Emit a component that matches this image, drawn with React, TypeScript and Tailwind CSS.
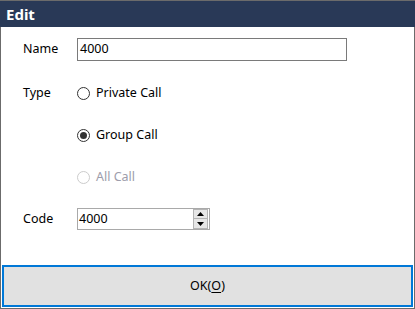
function Radio({ checked, disabled, label }: { checked?: boolean; disabled?: boolean; label: string }) {
  return (
    <div className="flex items-center h-[20px]">
      <span
        className={`w-[13px] h-[13px] rounded-full border flex items-center justify-center ${
          disabled ? "border-[#cccccc]" : "border-[#333333]"
        }`}
      >
        {checked && <span className="w-[7px] h-[7px] rounded-full bg-[#333333]" />}
      </span>
      <span className={`ml-[6px] ${disabled ? "text-[#9d9dab]" : "text-black"}`}>{label}</span>
    </div>
  );
}

export default function App() {
  return (
    <div
      className="w-[415px] h-[309px] border border-[#6b6b6b] bg-white flex flex-col text-[12.5px]"
      style={{ fontFamily: '"Noto Sans", "Open Sans", sans-serif' }}
    >
      {/* Title bar */}
      <div className="h-[26px] -mx-px bg-[#293957] flex items-center px-[6px]">
        <span className="text-white font-bold text-[15px] leading-none">Edit</span>
      </div>

      {/* Form */}
      <div className="flex-1 flex flex-col pl-[22px]">
        <div className="flex items-center mt-[11px] h-[23px]">
          <span className="w-[54px]">Name</span>
          <div className="w-[270px] h-[23px] border border-[#7a7a7a] flex items-center pl-[2px]">4000</div>
        </div>

        <div className="flex items-center mt-[22px]">
          <span className="w-[54px]">Type</span>
          <Radio label="Private Call" />
        </div>

        <div className="flex items-center mt-[22px] pl-[54px]">
          <Radio checked label="Group Call" />
        </div>

        <div className="flex items-center mt-[22px] pl-[54px]">
          <Radio disabled label="All Call" />
        </div>

        <div className="flex items-center mt-[21px] h-[22px]">
          <span className="w-[54px]">Code</span>
          <div className="w-[133px] h-[22px] border border-[#a9a9a9] flex items-center pl-[1px]">
            <span className="flex-1">4000</span>
            <div className="flex flex-col mr-[1px]">
              <div className="w-[15px] h-[10px] bg-[#e6e6e6] border border-[#b4b4b4] flex items-center justify-center">
                <svg width="7" height="4" viewBox="0 0 7 4">
                  <path d="M3.5 0 L7 4 L0 4 Z" fill="#000" />
                </svg>
              </div>
              <div className="w-[15px] h-[10px] bg-[#e6e6e6] border border-[#b4b4b4] border-t-0 flex items-center justify-center">
                <svg width="7" height="4" viewBox="0 0 7 4">
                  <path d="M0 0 L7 0 L3.5 4 Z" fill="#000" />
                </svg>
              </div>
            </div>
          </div>
        </div>
      </div>

      {/* OK button */}
      <div className="p-px">
        <button className="w-full h-[42px] border-2 border-[#0078d7] bg-[#e1e1e1] flex items-center justify-center text-black">
          OK(<span className="underline underline-offset-2">O</span>)
        </button>
      </div>
    </div>
  );
}
